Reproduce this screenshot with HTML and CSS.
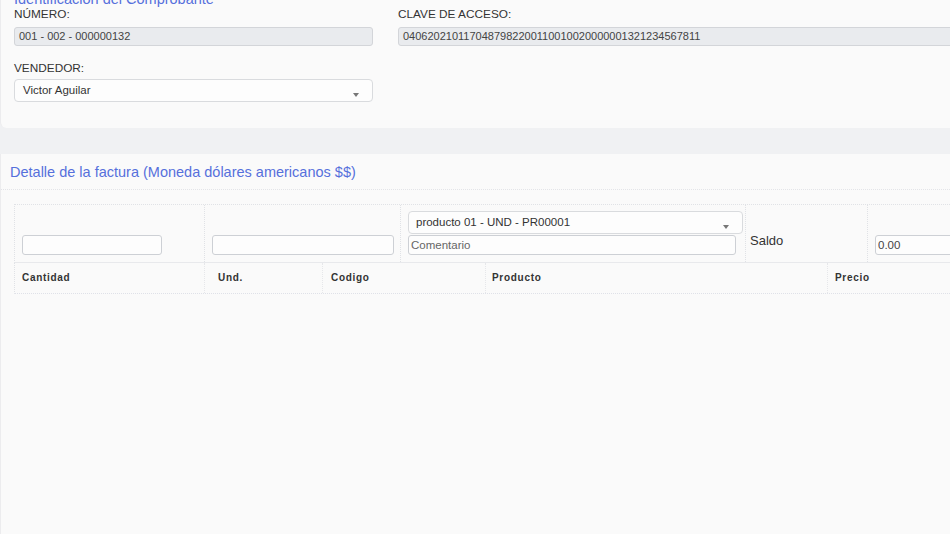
FILE: index.html
```html
<!DOCTYPE html>
<html lang="es">
<head>
<meta charset="utf-8">
<title>Factura</title>
<link rel="stylesheet" href="styles.css">
</head>
<body>
<div class="page">
  <section class="card card-top">
    <h2 class="card-title">Identificación del Comprobante</h2>
    <div class="field-row">
      <div class="field field-num">
        <label class="lbl">NÚMERO:</label>
        <div class="ro-input">001 - 002 - 000000132</div>
      </div>
      <div class="field field-clave">
        <label class="lbl">CLAVE DE ACCESO:</label>
        <div class="ro-input">0406202101170487982200110010020000001321234567811</div>
      </div>
    </div>
    <div class="field field-vend">
      <label class="lbl">VENDEDOR:</label>
      <div class="select">Victor Aguilar<span class="caret"></span></div>
    </div>
  </section>

  <section class="card card-detail">
    <h3 class="detail-title">Detalle de la factura (Moneda dólares americanos $$)</h3>
    <div class="tbl">
      <div class="row filter-row">
        <div class="cell c-cant"><div class="inp"></div></div>
        <div class="cell c-und"><div class="inp"></div></div>
        <div class="cell c-prod">
          <div class="select select-prod">producto 01 - UND - PR00001<span class="caret"></span></div>
          <div class="inp inp-com">Comentario</div>
        </div>
        <div class="cell c-saldo"><span class="saldo">Saldo</span></div>
        <div class="cell c-precio"><div class="inp inp-val">0.00</div></div>
      </div>
      <div class="row head-row">
        <div class="hcell h1">Cantidad</div>
        <div class="hcell h2">Und.</div>
        <div class="hcell h3">Codigo</div>
        <div class="hcell h4">Producto</div>
        <div class="hcell h5">Precio</div>
      </div>
    </div>
  </section>
</div>
</body>
</html>
```
FILE: styles.css
```css
* { box-sizing: border-box; }
html, body { margin: 0; padding: 0; }
body {
  background: #f0f1f3;
  font-family: "Liberation Sans", Arial, sans-serif;
  color: #333;
  width: 950px;
  height: 534px;
  overflow: hidden;
}
.page { width: 1200px; margin-top: -12px; }
.card {
  background: #fafafa;
  border-left: 1px solid #ececee;
}
.card-top {
  height: 137px;
  padding: 0 0 0 13px;
  border-bottom-left-radius: 6px;
}
.card-title {
  margin: 3px 0 0 0;
  font-size: 14.5px;
  font-weight: normal;
  color: #5670dc;
  line-height: 16px;
  height: 16px;
}
.field-row { display: flex; }
.field-num { width: 359px; }
.field-clave { margin-left: 25px; width: 780px; }
.lbl {
  display: block;
  font-size: 11.8px;
  line-height: 13px;
  height: 20px;
  padding-top: 1px;
  color: #333;
}
.ro-input {
  height: 19px;
  border: 1px solid #d3d5d9;
  border-radius: 3px;
  background: #e9ebee;
  font-size: 11px;
  line-height: 17px;
  padding-left: 4px;
  color: #444;
}
.field-vend { width: 359px; margin-top: 14px; }
.field-vend .lbl { height: 19px; padding-top: 2px; }
.select {
  position: relative;
  height: 23px;
  border: 1px solid #d9dbde;
  border-radius: 4px;
  background: #fdfdfd;
  font-size: 11.5px;
  line-height: 21px;
  padding-left: 8px;
  color: #333;
}
.caret {
  position: absolute;
  right: 13px;
  top: 13px;
  width: 0; height: 0;
  border-left: 3.5px solid transparent;
  border-right: 3.5px solid transparent;
  border-top: 4px solid #777;
}
.card-detail {
  margin-top: 26px;
  height: 400px;
  padding: 10px 0 0 0;
}
.detail-title {
  margin: 0 0 0 9px;
  font-size: 14.5px;
  font-weight: normal;
  color: #5670dc;
  line-height: 17px;
  padding-bottom: 8px;
}
.tbl {
  border-top: 1px dotted #e3e4e8;
  padding: 14px 0 0 13px;
}
.row { display: flex; }
.filter-row {
  height: 59px;
  border-top: 1px dotted #e0e2e6;
  border-left: 1px dotted #e0e2e6;
  border-bottom: 1px solid #e8e9ec;
}
.cell {
  border-right: 1px dotted #e0e2e6;
  padding: 30px 7px 0 7px;
}
.c-cant { width: 190px; }
.c-und { width: 196px; }
.c-prod { width: 345px; padding-top: 6px; }
.c-saldo { width: 122px; padding-top: 26px; padding-left: 4px; }
.c-precio { width: 300px; }
.inp {
  height: 20px;
  border: 1px solid #cdd0d5;
  border-radius: 3px;
  background: #fdfdfd;
  font-size: 11.5px;
  line-height: 18px;
  padding-left: 2px;
  color: #555;
}
.c-cant .inp { width: 140px; }
.c-und .inp { width: 182px; }
.select-prod { width: 335px; height: 23px; margin-bottom: 1px; padding-left: 7px; }
.select-prod .caret { right: 13px; top: 13px; }
.inp-com { width: 328px; color: #666; }
.saldo { font-size: 13px; color: #333; }
.inp-val { width: 290px; padding-left: 2px; color: #444; }
.head-row {
  height: 31px;
  border-left: 1px dotted #e0e2e6;
  border-bottom: 1px dotted #dfe1e8;
}
.hcell {
  border-right: 1px dotted #e6e7ea;
  font-size: 10px;
  font-weight: bold;
  letter-spacing: 0.7px;
  line-height: 30px;
  padding-left: 7px;
  color: #333;
}
.h1 { width: 190px; }
.h2 { width: 118px; padding-left: 13px; }
.h3 { width: 163px; padding-left: 8px; }
.h4 { width: 342px; padding-left: 6px; }
.h5 { width: 300px; padding-left: 7px; }
```
